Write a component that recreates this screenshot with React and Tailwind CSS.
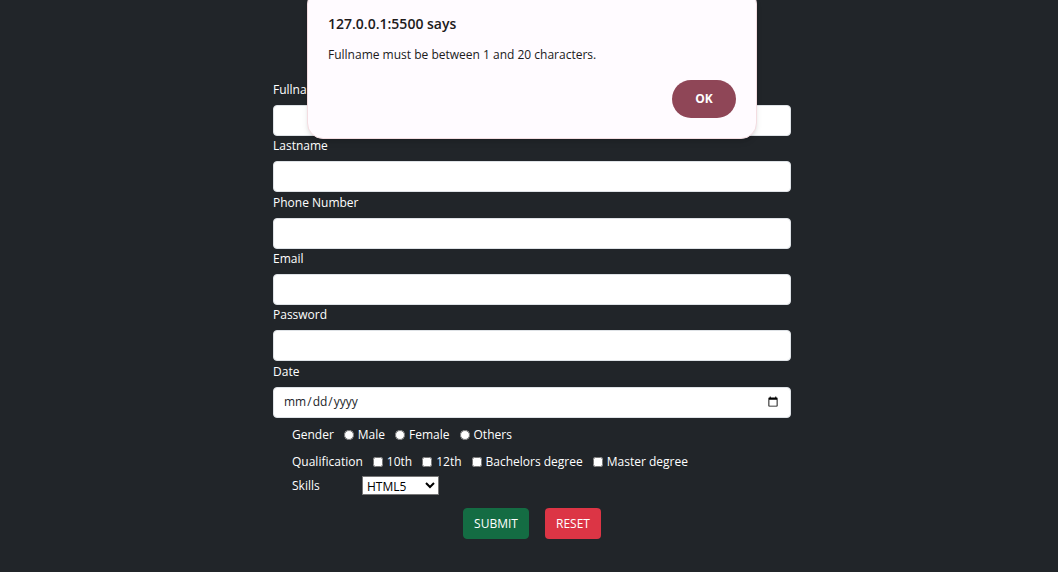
import React from "react";

const fields = [
  { id: "fullname", label: "Fullname", type: "text" },
  { id: "lastname", label: "Lastname", type: "text" },
  { id: "phone", label: "Phone Number", type: "tel" },
  { id: "email", label: "Email", type: "email" },
  { id: "password", label: "Password", type: "password" },
  { id: "date", label: "Date", type: "date" },
];

const genders = ["Male", "Female", "Others"];
const qualifications = ["10th", "12th", "Bachelors degree", "Master degree"];

function Field({ id, label, type }) {
  return (
    <div className="flex flex-col">
      <label htmlFor={id} className="h-[25px] leading-5">
        {label}
      </label>
      <input
        id={id}
        type={type}
        className="h-[31px] w-full rounded border border-[#dee2e6] bg-white px-[9px] text-xs text-[#212529]"
      />
    </div>
  );
}

function Choice({ type, name, label }) {
  return (
    <label className="flex items-center gap-1">
      <input type={type} name={name} className="size-[10px]" />
      {label}
    </label>
  );
}

function AlertDialog() {
  return (
    <div
      role="alertdialog"
      aria-labelledby="alert-title"
      aria-describedby="alert-text"
      className="absolute inset-x-0 -top-3 mx-auto w-[450px] max-w-full rounded-2xl border border-[#f3dde1] bg-[#fffbff] px-5 pt-[25px] pb-5 text-[#201a1b] shadow-md"
    >
      <h1 id="alert-title" className="text-sm leading-5 font-semibold">
        127.0.0.1:5500 says
      </h1>
      <p id="alert-text" className="mt-[11px] leading-5">
        Fullname must be between 1 and 20 characters.
      </p>
      <div className="mt-[15px] flex justify-end">
        <button
          type="button"
          className="h-[38px] w-16 rounded-full bg-[#8f4657] text-xs font-bold text-white"
        >
          OK
        </button>
      </div>
    </div>
  );
}

export default function App() {
  return (
    <main className="min-h-screen bg-[#212529] pl-1.5 font-['Open_Sans','Noto_Sans',sans-serif] text-xs text-white">
      <div className="relative mx-auto w-full max-w-[518px] pt-20 pb-8">
        <form>
          <div className="grid min-h-[338px] auto-rows-fr">
            {fields.map((field) => (
              <Field key={field.id} {...field} />
            ))}
          </div>
          <div className="flex flex-col px-[19px] pt-[7px]">
            <fieldset className="flex h-[27px] items-start gap-2.5 leading-5">
              <legend className="float-left">Gender</legend>
              {genders.map((label) => (
                <Choice key={label} type="radio" name="gender" label={label} />
              ))}
            </fieldset>
            <fieldset className="flex h-6 items-start gap-2.5 leading-5">
              <legend className="float-left">Qualification</legend>
              {qualifications.map((label) => (
                <Choice key={label} type="checkbox" name="qualification" label={label} />
              ))}
            </fieldset>
            <div className="flex items-start leading-5">
              <label htmlFor="skills" className="w-[70px]">
                Skills
              </label>
              <select
                id="skills"
                className="h-[19px] w-[77px] border border-[#767676] bg-white text-xs text-black"
              >
                <option>HTML5</option>
                <option>CSS3</option>
                <option>JavaScript</option>
              </select>
            </div>
          </div>
          <div className="mt-3 flex justify-center gap-4">
            <button
              type="submit"
              className="h-[31px] w-[66px] rounded border border-[#146c43] bg-[#146c43]"
            >
              SUBMIT
            </button>
            <button type="reset" className="h-[31px] w-14 rounded bg-[#dc3545]">
              RESET
            </button>
          </div>
        </form>
        <AlertDialog />
      </div>
    </main>
  );
}
